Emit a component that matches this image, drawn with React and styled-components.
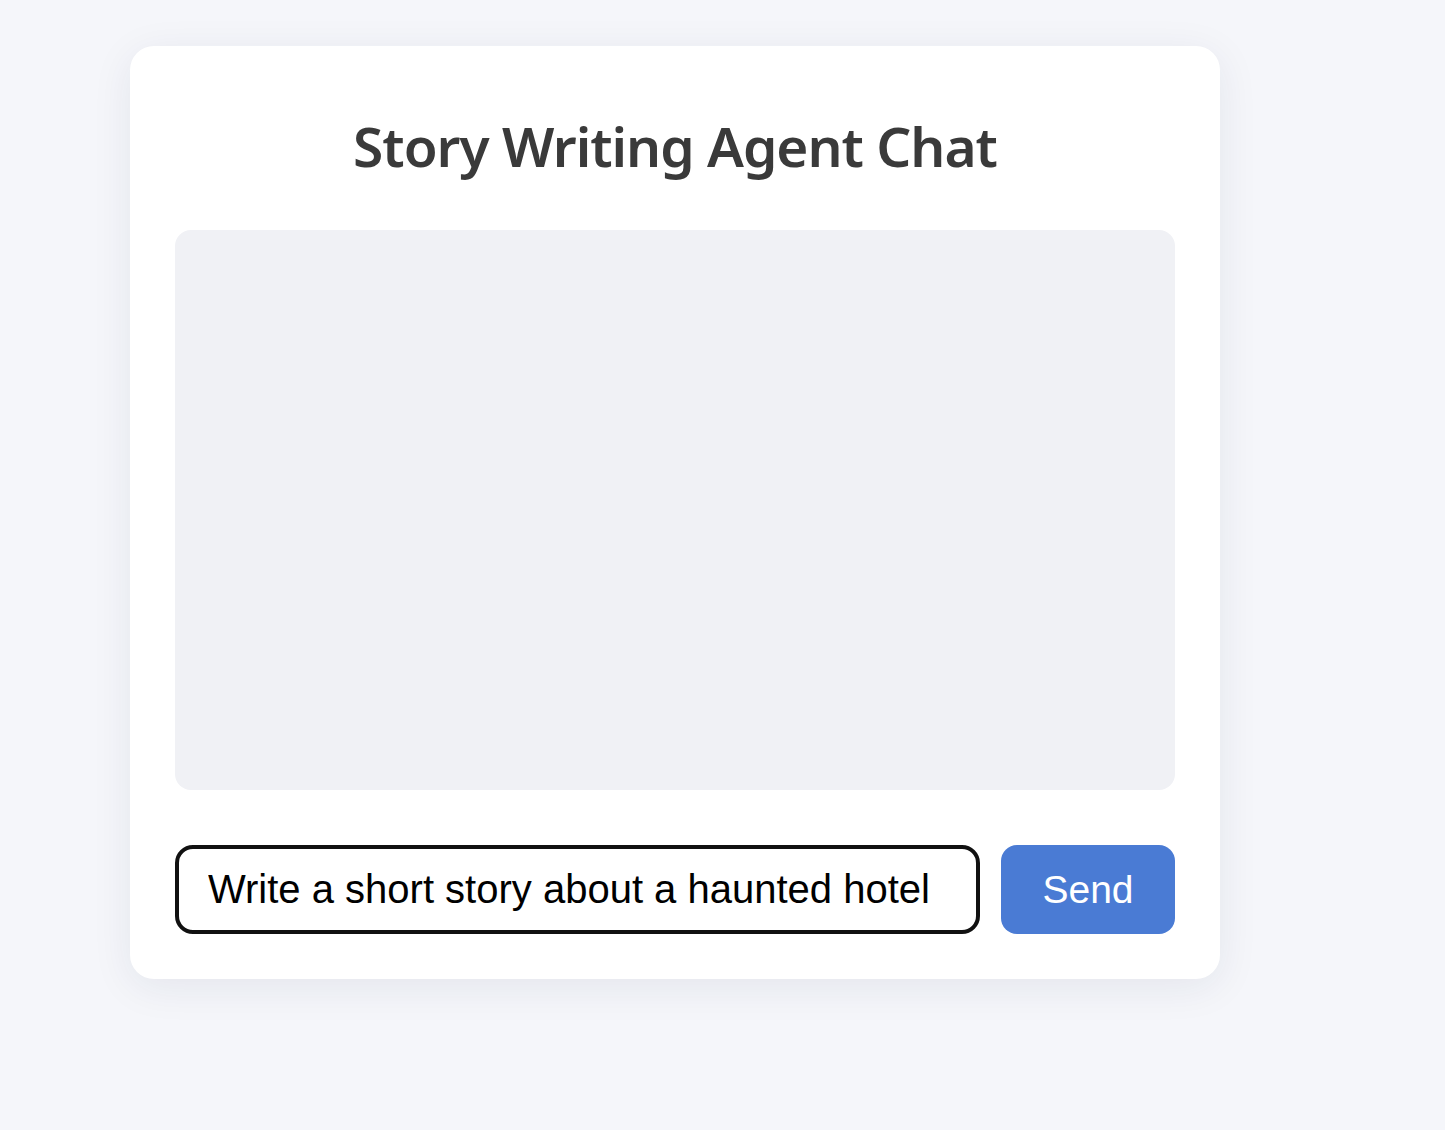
import React, { useState } from 'react';
import styled, { createGlobalStyle } from 'styled-components';

const GlobalStyle = createGlobalStyle`
  html, body {
    margin: 0;
    background-color: #f5f6fa;
  }
  * {
    box-sizing: border-box;
  }
`;

const Page = styled.div`
  min-height: 1130px;
  padding: 46px 0 0 130px;
`;

const Card = styled.div`
  width: 1090px;
  background-color: #fff;
  border-radius: 24px;
  padding: 0 45px 45px;
  box-shadow: 0 8px 40px rgba(30, 40, 80, 0.08);
`;

const Title = styled.h1`
  margin: 0;
  padding: 66px 0 51px;
  text-align: center;
  font-family: 'Noto Sans', 'Open Sans', sans-serif;
  font-weight: 600;
  font-size: 55px;
  letter-spacing: -1px;
  line-height: 67px;
  color: #3a3a3a;
`;

const Messages = styled.div`
  height: 560px;
  background-color: #f0f1f5;
  border-radius: 16px;
  overflow-y: auto;
`;

const InputRow = styled.div`
  display: flex;
  gap: 21px;
  margin-top: 55px;

  input {
    flex: 1;
    height: 89px;
    border: 4px solid #111;
    border-radius: 18px;
    padding: 0 29px;
    font-family: 'Liberation Sans', Arial, sans-serif;
    font-size: 40px;
    color: #000;
    outline: none;
  }
  button {
    width: 174px;
    height: 89px;
    border: none;
    border-radius: 16px;
    background-color: #4a7bd4;
    color: #fff;
    font-family: 'Liberation Sans', Arial, sans-serif;
    font-size: 39px;
    cursor: pointer;
  }
`;

const App = () => {
  const [text, setText] = useState('Write a short story about a haunted hotel');
  const [messages, setMessages] = useState([]);

  const onSend = () => {
    if (!text.trim()) return;
    setMessages((state) => [...state, text]);
    setText('');
  };

  return (
    <Page>
      <GlobalStyle />
      <Card>
        <Title>Story Writing Agent Chat</Title>
        <Messages>
          {messages.map((m, i) => (
            <div key={i}>{m}</div>
          ))}
        </Messages>
        <InputRow>
          <input type='text' value={text} onChange={(e) => setText(e.target.value)} />
          <button onClick={onSend}>Send</button>
        </InputRow>
      </Card>
    </Page>
  );
};

export default App;
